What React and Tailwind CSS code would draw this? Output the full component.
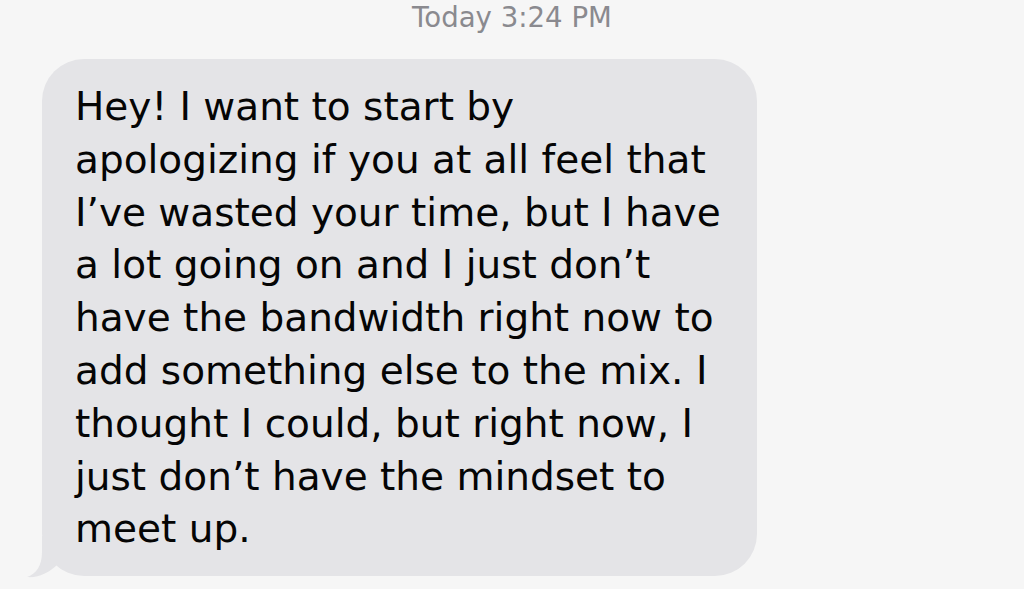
const MESSAGE =
  "Hey! I want to start by apologizing if you at all feel that I\u2019ve wasted your time, but I have a lot going on and I just don\u2019t have the bandwidth right now to add something else to the mix. I thought I could, but right now, I just don\u2019t have the mindset to meet up.";

const Tail = () => (
  <svg
    className="absolute left-[-16px] bottom-[-6px] w-[40px] h-[46px]"
    viewBox="26 540 40 46"
  >
    <path
      d="M42 540 L42 556 C42 570 36 578 27 581 C38 582 50 577 60 566 L60 540 Z"
      fill="#e4e4e7"
    />
  </svg>
);

const App = () => {
  return (
    <div
      className="min-h-screen w-full bg-[#f6f6f6] overflow-hidden"
      style={{ fontFamily: '"DejaVu Sans", "Liberation Sans", sans-serif' }}
    >
      {/* Timestamp */}
      <div className="pt-[2px] text-center text-[27.6px] leading-[32px] text-[#8a8a8f]">
        <span className="font-medium">Today</span> 3:24 PM
      </div>

      {/* Incoming bubble */}
      <div className="mt-[25px] ml-[42px] relative w-[715px]">
        <Tail />
        <div className="relative rounded-[42px] bg-[#e4e4e7] pl-[33px] pr-[24px] pt-[22px] pb-[20px]">
          <p className="text-[39px] leading-[52.8px] text-[#050505]">{MESSAGE}</p>
        </div>
      </div>
    </div>
  );
};

export default App;
